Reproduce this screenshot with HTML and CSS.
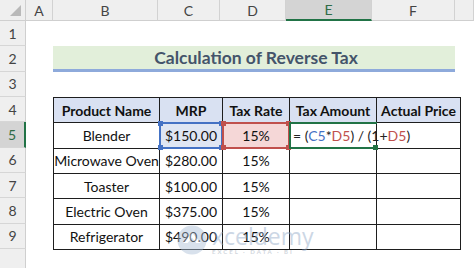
FILE: index.html
```html
<!DOCTYPE html>
<html lang="en">
<head>
    <meta charset="UTF-8">
    <meta name="viewport" content="width=device-width, initial-scale=1.0">
    <title>Calculation of Reverse Tax</title>
    <link rel="stylesheet" href="styles.css">
</head>
<body>
    <div class="sheet">
        <!-- column headers -->
        <div class="corner"><span class="tri"></span></div>
        <div class="colhead">A</div>
        <div class="colhead">B</div>
        <div class="colhead">C</div>
        <div class="colhead">D</div>
        <div class="colhead active">E</div>
        <div class="colhead">F</div>
        <div class="colhead"></div>

        <!-- row headers -->
        <div class="rowhead r1">1</div>
        <div class="rowhead r2">2</div>
        <div class="rowhead r3">3</div>
        <div class="rowhead r4">4</div>
        <div class="rowhead r5 active">5</div>
        <div class="rowhead r6">6</div>
        <div class="rowhead r7">7</div>
        <div class="rowhead r8">8</div>
        <div class="rowhead r9">9</div>
        <div class="rowhead r10"></div>

        <!-- title -->
        <div class="title">Calculation of Reverse Tax</div>

        <!-- data table -->
        <div class="data">
            <table>
                <tr class="head">
                    <th class="cb">Product Name</th>
                    <th class="cc">MRP</th>
                    <th class="cd">Tax Rate</th>
                    <th class="ce">Tax Amount</th>
                    <th class="cf">Actual Price</th>
                </tr>
                <tr>
                    <td>Blender</td>
                    <td class="sel-blue"><span class="frame"><i class="k tl"></i><i class="k tr"></i><i class="k bl"></i><i class="k br"></i></span>$150.00</td>
                    <td class="sel-red"><span class="frame"><i class="k tl"></i><i class="k tr"></i><i class="k bl"></i><i class="k br"></i></span>15%</td>
                    <td class="sel-green"><span class="frame"><i class="k br"></i></span><span class="formula">= (<b class="fb">C5</b>*<b class="fr">D5</b>) / (1+<b class="fr">D5</b>)</span></td>
                    <td></td>
                </tr>
                <tr><td>Microwave Oven</td><td>$280.00</td><td>15%</td><td></td><td></td></tr>
                <tr><td>Toaster</td><td>$100.00</td><td>15%</td><td></td><td></td></tr>
                <tr><td>Electric Oven</td><td>$375.00</td><td>15%</td><td></td><td></td></tr>
                <tr><td>Refrigerator</td><td>$490.00</td><td>15%</td><td></td><td></td></tr>
            </table>
        </div>

        <!-- watermark -->
        <div class="mark">
            <svg class="mark-logo" width="32" height="32" viewBox="0 0 22 22">
                <circle cx="11" cy="11" r="10" fill="#a9bdd6"/>
                <path d="M5 13 L11 6 L17 13 L14 13 L11 9.5 L8 13 Z" fill="#ffffff"/>
            </svg>
            <div class="mark-text">
                <span class="mark-name">xceldemy</span>
                <span class="mark-sub">EXCEL · DATA · BI</span>
            </div>
        </div>
    </div>
</body>
</html>
```

FILE: styles.css
```css
body {
    margin: 0;
    background: #ffffff;
    font-family: Lato, "Open Sans", sans-serif;
    overflow: hidden;
}
.sheet {
    position: relative;
    display: grid;
    grid-template-columns: 26px 27px 105px 62px 66px 86px 83px 1fr;
    grid-template-rows: 21px repeat(10, 25.33px);
    width: 474px;
    height: 268px;
}
.corner {
    position: relative;
    background: #efefef;
    border-right: 1px solid #cfcfcf;
    border-bottom: 1px solid #cfcfcf;
}
.tri {
    position: absolute;
    right: 4px;
    bottom: 4px;
    width: 0;
    height: 0;
    border-left: 11px solid transparent;
    border-bottom: 11px solid #b9b9b9;
}
.colhead {
    background: #efefef;
    border-right: 1px solid #d2d2d2;
    border-bottom: 1px solid #cfcfcf;
    color: #444;
    font-size: 14px;
    display: flex;
    align-items: center;
    justify-content: center;
}
.colhead.active {
    background: #d4d4d4;
    border-bottom: 2px solid #217346;
    color: #2f6b45;
}
.rowhead {
    grid-column: 1;
    background: #efefef;
    border-right: 1px solid #cfcfcf;
    border-bottom: 1px solid #d6d6d6;
    color: #444;
    font-size: 14px;
    display: flex;
    align-items: center;
    justify-content: center;
}
.rowhead.active {
    background: #d4d4d4;
    border-right: 2px solid #217346;
    color: #2f6b45;
}
.r1 { grid-row: 2; }
.r2 { grid-row: 3; }
.r3 { grid-row: 4; }
.r4 { grid-row: 5; }
.r5 { grid-row: 6; }
.r6 { grid-row: 7; }
.r7 { grid-row: 8; }
.r8 { grid-row: 9; }
.r9 { grid-row: 10; }
.r10 { grid-row: 11; }

.title {
    grid-column: 3 / 8;
    grid-row: 3;
    background: #e2efda;
    border-bottom: 3px solid #8eaadb;
    color: #44546a;
    font-weight: bold;
    font-size: 17.5px;
    display: flex;
    align-items: center;
    justify-content: center;
    padding-left: 4px;
}

.data {
    grid-column: 3 / 8;
    grid-row: 5 / 11;
}
table {
    border-collapse: collapse;
    table-layout: fixed;
    width: 402px;
    color: #111;
    font-size: 14px;
}
th, td {
    border: 1px solid #1e1e1e;
    height: 24.33px;
    padding: 0;
    text-align: center;
    position: relative;
    white-space: nowrap;
}
.head th {
    background: #d9e1f2;
    font-weight: bold;
}
.cb { width: 105px; }
.cc { width: 62px; }
.cd { width: 66px; }
.ce { width: 86px; }
.cf { width: 83px; }

.frame {
    position: absolute;
    left: -1px;
    top: -1px;
    right: -1px;
    bottom: -1px;
    border: 2px solid transparent;
}
.sel-blue { background: #dfe6f3; }
.sel-blue .frame { border-color: #4472c4; }
.sel-blue .k { background: #4472c4; }
.sel-red { background: #f5d7d7; }
.sel-red .frame { border-color: #c0504d; }
.sel-red .k { background: #c0504d; }
.sel-green .frame {
    border-color: #217346;
    border-right: none;
}
.sel-green .k { background: #217346; }
.k {
    position: absolute;
    width: 5px;
    height: 5px;
}
.tl { left: -3px; top: -3px; }
.tr { right: -3px; top: -3px; }
.bl { left: -3px; bottom: -3px; }
.br { right: -3px; bottom: -3px; }
.sel-green .br { right: -1px; }

.sel-green { text-align: left; overflow: visible; }
.formula {
    position: relative;
    padding-left: 3px;
    color: #222;
}
.formula b { font-weight: normal; }
.fb { color: #4472c4; }
.fr { color: #c0504d; }

.mark {
    position: absolute;
    left: 176px;
    top: 224px;
    display: flex;
    align-items: flex-start;
    gap: 4px;
    opacity: 0.45;
    pointer-events: none;
}
.mark-text {
    display: flex;
    flex-direction: column;
    line-height: 1;
    padding-top: 1px;
}
.mark-name {
    font-family: "Open Sans", sans-serif;
    font-size: 23px;
    color: #8fa7c6;
}
.mark-sub {
    font-size: 6px;
    color: #9aa6b4;
    letter-spacing: 2px;
    font-weight: bold;
    margin-top: 1px;
}
```
